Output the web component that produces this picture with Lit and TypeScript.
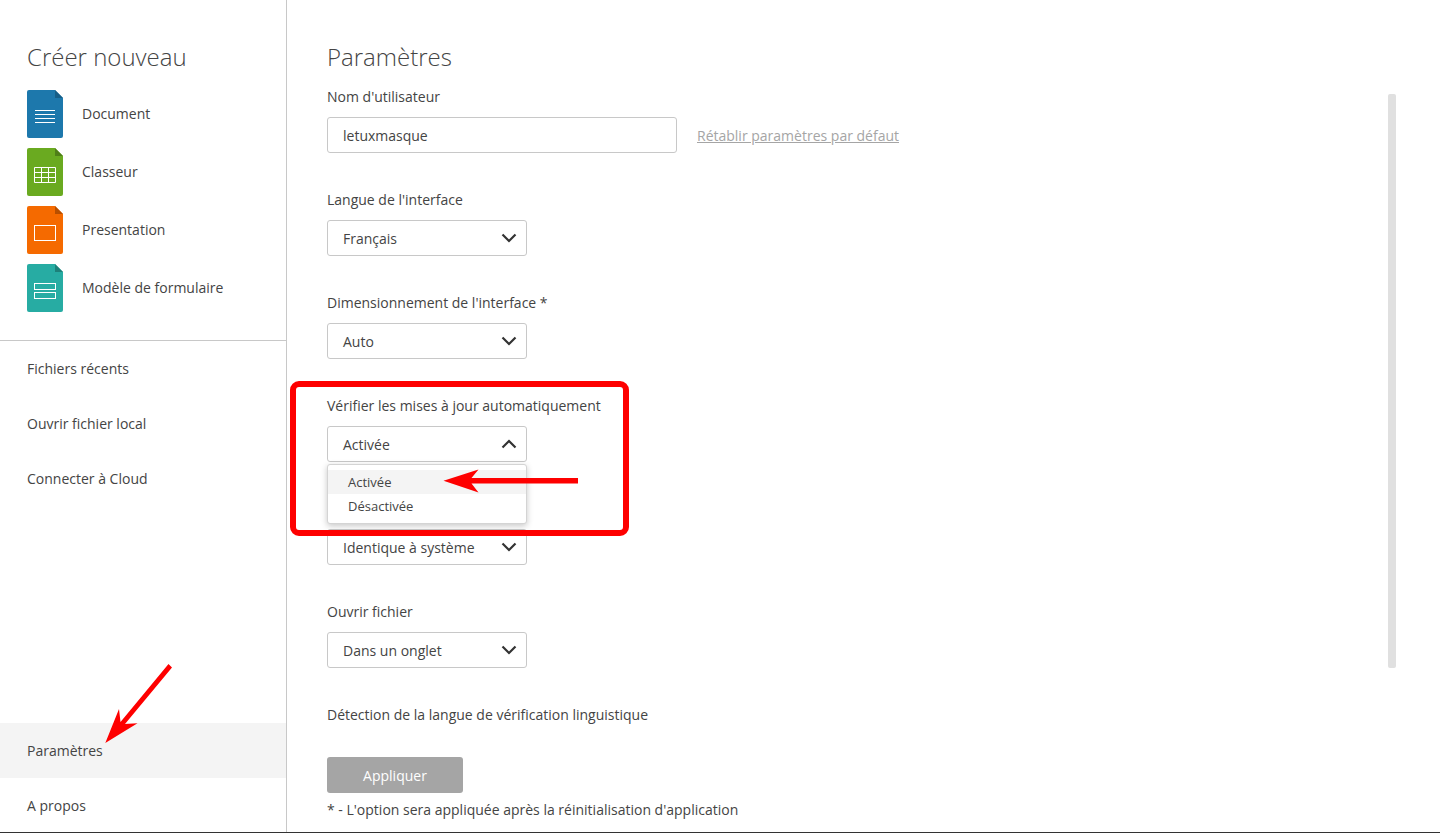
import { LitElement, html, css, svg } from "lit";
import { customElement } from "lit/decorators.js";

const chevron = (up = false) => html`<svg class="chev" width="16" height="10" viewBox="0 0 16 10"><path d=${up ? "M1.5 8.5L8 2L14.5 8.5" : "M1.5 1.5L8 8L14.5 1.5"} fill="none" stroke="#333" stroke-width="2.2"/></svg>`;

const docIcon = (color: string, fold: string, inner: unknown) => html`<svg class="ficon" width="36" height="48" viewBox="0 0 36 48">
  <path d="M2 0H28L36 8V46a2 2 0 0 1-2 2H2a2 2 0 0 1-2-2V2a2 2 0 0 1 2-2Z" fill=${color}/>
  <path d="M28 0L36 8H28Z" fill=${fold}/>
  ${inner}
</svg>`;

const icons = {
  doc: docIcon("#1d78ac", "#175e87", svg`<path d="M8 20.5H28M8 24.5H28M8 28.5H28M8 32.5H28" stroke="#fff" stroke-width="1"/>`),
  sheet: docIcon("#6aaa20", "#4f7f18", svg`<path d="M7.5 19.5H28.5V34.5H7.5ZM7.5 24.5H28.5M7.5 29.5H28.5M14.5 19.5V34.5M21.5 19.5V34.5" fill="none" stroke="#fff" stroke-width="1"/>`),
  slide: docIcon("#f56a00", "#b84f00", svg`<rect x="7.5" y="19.5" width="21" height="15" fill="none" stroke="#fff" stroke-width="1"/>`),
  form: docIcon("#27aca3", "#1d817a", svg`<rect x="7.5" y="19.5" width="21" height="6" fill="none" stroke="#fff" stroke-width="1"/><rect x="7.5" y="28.5" width="21" height="6" fill="none" stroke="#fff" stroke-width="1"/>`),
};

@customElement("app-root")
export class AppRoot extends LitElement {
  static styles = css`
    :host { display: block; position: relative; width: 1440px; height: 833px; overflow: hidden; background: #fff; font-family: "Open Sans", "Noto Sans", sans-serif; font-size: 14px; color: #444; box-sizing: border-box; }
    :host::after { content: ""; position: absolute; left: 0; right: 0; bottom: 0; height: 1px; background: #333; z-index: 4; }
    .layout { display: grid; grid-template-columns: 287px 1fr; height: 833px; }
    .side { display: flex; flex-direction: column; border-right: 1px solid #c8c8c8; box-sizing: border-box; height: 833px; }
    .side h2 { font-weight: 300; font-size: 24px; line-height: 36px; margin: 39px 0 15px 27px; color: #444; }
    .create { display: flex; flex-direction: column; gap: 10px; padding-left: 27px; padding-bottom: 28px; border-bottom: 1px solid #c8c8c8; }
    .create-row { display: flex; align-items: center; gap: 19px; height: 48px; }
    .create-row span { padding-bottom: 2px; }
    .ficon { display: block; flex: none; }
    .nav { display: flex; align-items: center; height: 55px; padding-left: 27px; }
    .nav.active { background: #f4f4f4; }
    .spacer { flex: 1; }
    .main { padding: 39px 0 0 40px; }
    .main h1 { font-weight: 300; font-size: 24px; line-height: 36px; margin: 0 0 11px; color: #444; }
    .group { height: 103px; }
    .group label { display: block; height: 20px; line-height: 20px; padding-top: 1px; margin-bottom: 10px; }
    .inrow { display: flex; align-items: center; gap: 20px; }
    .field { box-sizing: border-box; height: 36px; border: 1px solid #c8c8c8; border-radius: 3px; background: #fff; display: flex; align-items: center; justify-content: space-between; padding: 0 9px 0 15px; width: 200px; color: #444; }
    .field.wide { width: 350px; }
    .link { color: #a5a5a5; text-decoration: underline; }
    .apply { box-sizing: border-box; display: flex; width: 136px; height: 36px; background: #a5a5a5; color: #fff; border-radius: 3px; align-items: center; justify-content: center; margin-top: 21px; border: 0; font: inherit; padding: 0; }
    .note { line-height: 20px; margin-top: 7px; }
    .lastgroup { height: 32px; }
    .lastgroup label { display: block; line-height: 20px; padding-top: 1px; }
    .menu-anchor { position: relative; }
    .menu { position: absolute; left: 0; top: 38px; width: 200px; box-sizing: border-box; padding: 5px 0; background: #fff; border: 1px solid #d4d4d4; border-radius: 3px; box-shadow: 0 2px 6px rgba(0,0,0,.22); font-size: 13px; z-index: 2; }
    .menu div { height: 24px; display: flex; align-items: center; padding-left: 20px; }
    .menu .sel { background: #f4f4f4; }
    .scrollbar { position: absolute; left: 1388px; top: 94px; width: 8px; height: 574px; border-radius: 2px; background: #e0e0e0; }
    .annot { position: absolute; inset: 0; pointer-events: none; z-index: 3; }
  `;

  private select(label: string, value: string) {
    return html`<div class="group"><label>${label}</label><div class="field">${value}${chevron()}</div></div>`;
  }

  render() {
    return html`
      <div class="layout">
        <aside class="side">
          <h2>Créer nouveau</h2>
          <div class="create">
            <div class="create-row">${icons.doc}<span>Document</span></div>
            <div class="create-row">${icons.sheet}<span>Classeur</span></div>
            <div class="create-row">${icons.slide}<span>Presentation</span></div>
            <div class="create-row">${icons.form}<span>Modèle de formulaire</span></div>
          </div>
          <div class="nav">Fichiers récents</div>
          <div class="nav">Ouvrir fichier local</div>
          <div class="nav">Connecter à Cloud</div>
          <div class="spacer"></div>
          <div class="nav active">Paramètres</div>
          <div class="nav">A propos</div>
        </aside>
        <main class="main">
          <h1>Paramètres</h1>
          <div class="group">
            <label>Nom d'utilisateur</label>
            <div class="inrow"><div class="field wide">letuxmasque</div><span class="link">Rétablir paramètres par défaut</span></div>
          </div>
          ${this.select("Langue de l'interface", "Français")}
          ${this.select("Dimensionnement de l'interface *", "Auto")}
          <div class="group">
            <label>Vérifier les mises à jour automatiquement</label>
            <div class="menu-anchor">
              <div class="field">Activée${chevron(true)}</div>
              <div class="menu"><div class="sel">Activée</div><div>Désactivée</div></div>
            </div>
          </div>
          ${this.select("", "Identique à système")}
          ${this.select("Ouvrir fichier", "Dans un onglet")}
          <div class="lastgroup"><label>Détection de la langue de vérification linguistique</label></div>
          <button class="apply">Appliquer</button>
          <div class="note">* - L'option sera appliquée après la réinitialisation d'application</div>
        </main>
      </div>
      <div class="scrollbar"></div>
      <svg class="annot" width="1440" height="833" viewBox="0 0 1440 833">
        <rect x="293" y="384" width="333" height="149" rx="6" fill="none" stroke="#fe0000" stroke-width="6"/>
        <path d="M578 478V483.5H471.5L478.5 492.5L443.5 480.7L478.5 469.5L471.5 478Z" fill="#fe0000"/>
        <path d="M168.5 664L172 667.5L125 724L137.5 723.3L105.3 743L119 709L120.5 722Z" fill="#fe0000"/>
      </svg>
    `;
  }
}
